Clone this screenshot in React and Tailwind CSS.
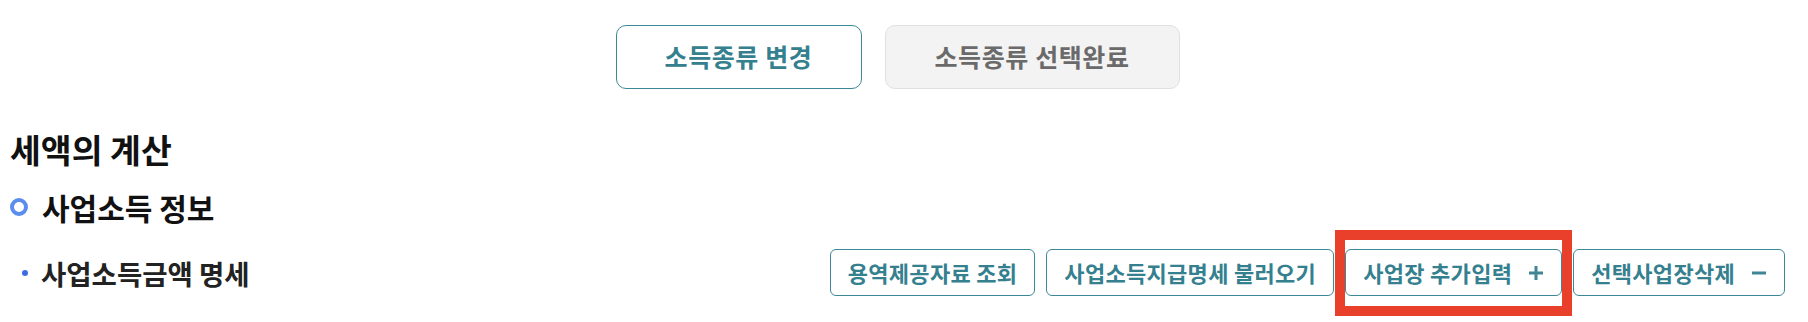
import React from 'react';

const font = { fontFamily: '"Noto Sans CJK KR", "Noto Sans", sans-serif' };

const OutlineButton = ({ children, icon }) => (
  <button className="flex h-[47px] items-center gap-[16px] rounded-[6px] border border-[#3d8898] bg-white px-[17px] text-[22px] font-bold tracking-[0.3px] text-[#35808f]">
    <span>{children}</span>
    {icon}
  </button>
);

const PlusIcon = () => (
  <svg width="16" height="16" viewBox="0 0 16 16" className="text-[#3f8595]">
    <path d="M8 1v14M1 8h14" stroke="currentColor" strokeWidth="3" />
  </svg>
);

const MinusIcon = () => (
  <svg width="16" height="16" viewBox="0 0 16 16" className="text-[#3f8595]">
    <path d="M1 8h14" stroke="currentColor" strokeWidth="3" />
  </svg>
);

export default function App() {
  return (
    <div className="h-[322px] w-full bg-white pl-[10px] pr-[23px]" style={font}>
      <div className="flex justify-center gap-[23px] pt-[25px]">
        <button className="h-[64px] w-[246px] rounded-[10px] border border-[#3d8898] bg-white text-[25px] font-bold tracking-[0.6px] text-[#35808f]">
          소득종류 변경
        </button>
        <button className="h-[64px] w-[295px] rounded-[10px] border border-[#e0e0e0] bg-[#f3f3f3] text-[25px] font-bold tracking-[0.6px] text-[#6a6a6a]">
          소득종류 선택완료
        </button>
      </div>

      <h2 className="mt-[40px] text-[33.5px] font-bold leading-[40px] text-[#111]">세액의 계산</h2>

      <div className="mt-[21px] flex h-[34px] items-center gap-[14px]">
        <span className="h-[18px] w-[18px] rounded-full border-[4px] border-[#5b8def]" />
        <h3 className="text-[30px] font-bold leading-[34px] text-[#111]">사업소득 정보</h3>
      </div>

      <div className="mt-[25px] flex items-center justify-between">
        <div className="flex items-center gap-[13px] pl-[12px]">
          <span className="h-[6px] w-[6px] rounded-full bg-[#3b6fe0]" />
          <h4 className="text-[27.5px] font-bold leading-[34px] text-[#222]">사업소득금액 명세</h4>
        </div>
        <div className="flex items-center gap-[11px]">
          <OutlineButton>용역제공자료 조회</OutlineButton>
          <OutlineButton>사업소득지급명세 불러오기</OutlineButton>
          <div className="relative">
            <OutlineButton icon={<PlusIcon />}>사업장 추가입력</OutlineButton>
            <div className="pointer-events-none absolute -bottom-[20px] -left-[10px] -right-[10px] -top-[19px] border-[10px] border-[#e8402a]" />
          </div>
          <OutlineButton icon={<MinusIcon />}>선택사업장삭제</OutlineButton>
        </div>
      </div>
    </div>
  );
}
